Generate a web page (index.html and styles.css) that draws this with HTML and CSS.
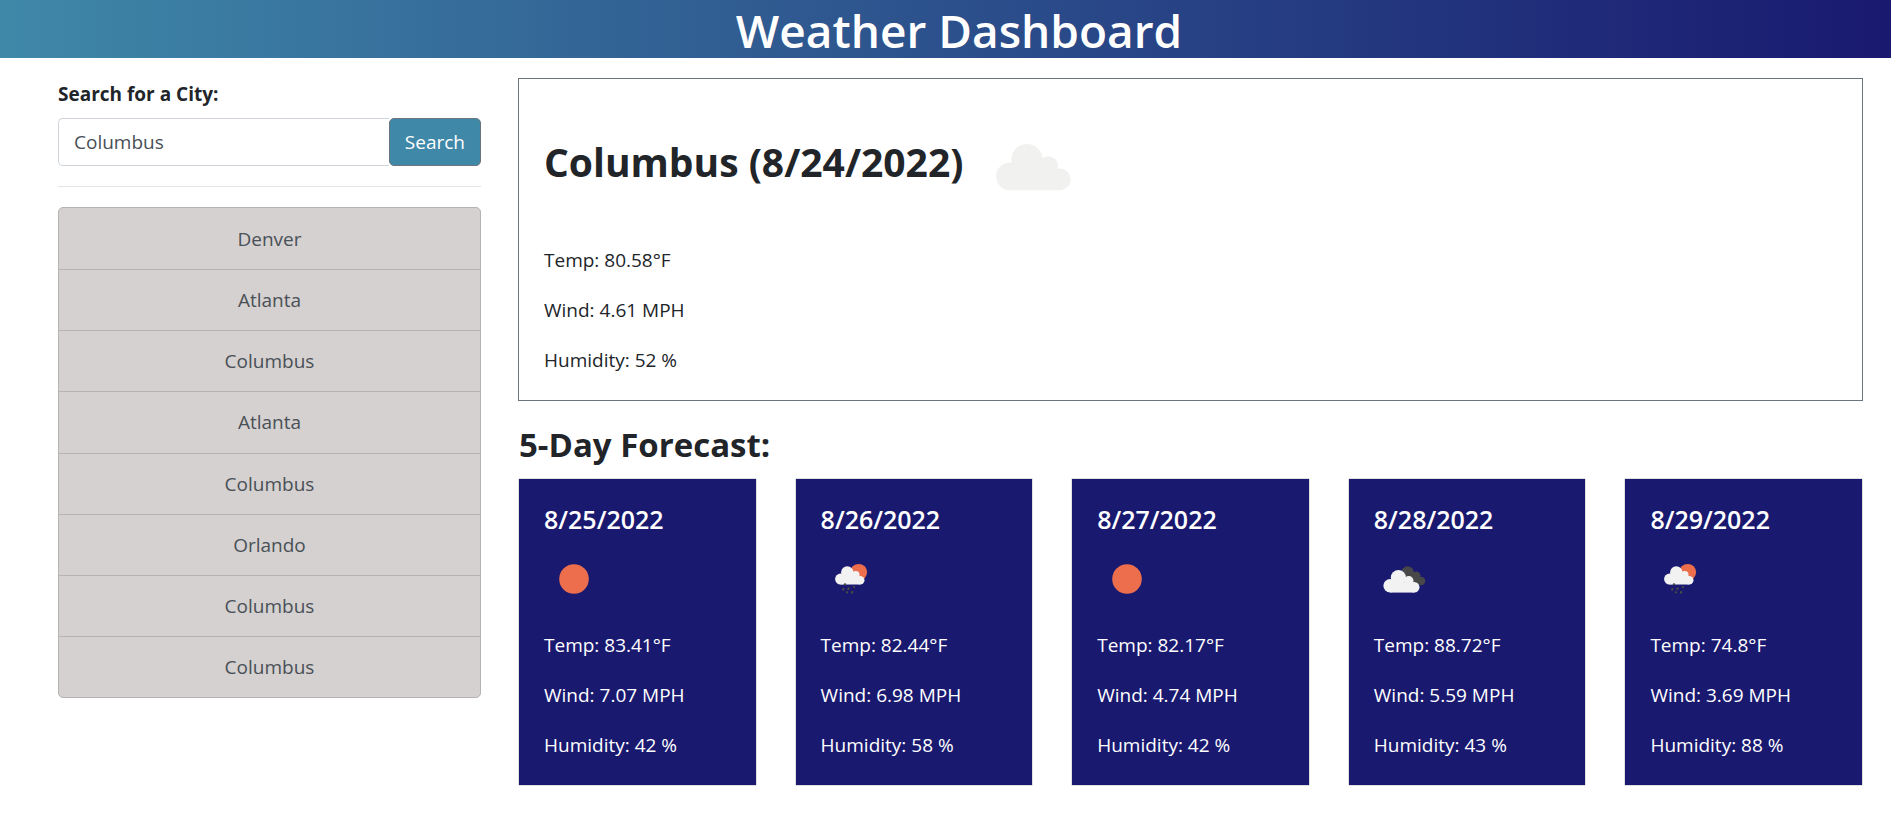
FILE: index.html
```html
<!DOCTYPE html>
<html lang="en">
<head>
<meta charset="utf-8">
<meta name="viewport" content="width=device-width, initial-scale=1">
<title>Weather Dashboard</title>
<link rel="stylesheet" href="styles.css">
</head>
<body>
<svg class="sprite" aria-hidden="true">
  <symbol id="cloud" viewBox="0 0 100 100">
    <circle cx="27" cy="59.3" r="13.9"/>
    <circle cx="44" cy="42.6" r="15.6"/>
    <circle cx="65.3" cy="49" r="9.8"/>
    <circle cx="76.7" cy="62.4" r="10.8"/>
    <rect x="27" y="52" width="49.7" height="21.2"/>
  </symbol>
  <symbol id="sun" viewBox="0 0 60 60">
    <circle cx="30" cy="30" r="14.8" fill="#ec6e4c"/>
  </symbol>
  <symbol id="rain" viewBox="0 0 60 60">
    <circle cx="37.7" cy="23.3" r="8.4" fill="#ec6e4c"/>
    <use href="#cloud" x="8.9" y="6.6" width="39.5" height="39.5" fill="#f2f2f2"/>
    <path d="M24.4 34.4l-.6 1.8M22.8 39.1l-.9 2.4M27.9 38.5l-.9 2.4M33.4 37.1l-.7 1.8M26.4 42.4l-.6 1.8M31.5 42.1l-.9 2.4" stroke="#4b4b46" stroke-width="2" fill="none"/>
  </symbol>
  <symbol id="clouds" viewBox="0 0 60 60">
    <g fill="#484848">
      <circle cx="33.6" cy="23.6" r="6.3"/>
      <circle cx="42.3" cy="26.6" r="4.2"/>
      <circle cx="47.1" cy="32" r="4.2"/>
      <path d="M34 24l8 1 5 4v7h-9z"/>
    </g>
    <use href="#cloud" x="3" y="8" width="48.6" height="48.6" fill="#f2f2f2"/>
  </symbol>
</svg>

<header class="banner"><h1 class="banner-title">Weather Dashboard</h1></header>

<div class="layout">
  <aside class="sidebar">
    <form class="search">
      <label class="search-label" for="city">Search for a City:</label>
      <div class="search-row">
        <input class="search-input" id="city" type="text" value="Columbus">
        <button class="search-button" type="button">Search</button>
      </div>
    </form>
    <hr class="divider">
    <div class="history">
      <button class="history-item" type="button">Denver</button>
      <button class="history-item" type="button">Atlanta</button>
      <button class="history-item" type="button">Columbus</button>
      <button class="history-item" type="button">Atlanta</button>
      <button class="history-item" type="button">Columbus</button>
      <button class="history-item" type="button">Orlando</button>
      <button class="history-item" type="button">Columbus</button>
      <button class="history-item" type="button">Columbus</button>
    </div>
  </aside>

  <main class="content">
    <section class="current">
      <div class="current-head">
        <h2 class="current-title">Columbus (8/24/2022)</h2>
        <svg class="current-icon" role="img" aria-label="Cloudy"><use href="#cloud"/></svg>
      </div>
      <p class="reading">Temp: 80.58°F</p>
      <p class="reading">Wind: 4.61 MPH</p>
      <p class="reading">Humidity: 52 %</p>
    </section>

    <h2 class="forecast-title">5-Day Forecast:</h2>
    <section class="forecast">
      <article class="card">
        <h3 class="card-date">8/25/2022</h3>
        <svg class="card-icon" role="img" aria-label="Clear"><use href="#sun"/></svg>
        <p class="reading">Temp: 83.41°F</p>
        <p class="reading">Wind: 7.07 MPH</p>
        <p class="reading">Humidity: 42 %</p>
      </article>
      <article class="card">
        <h3 class="card-date">8/26/2022</h3>
        <svg class="card-icon" role="img" aria-label="Rain"><use href="#rain"/></svg>
        <p class="reading">Temp: 82.44°F</p>
        <p class="reading">Wind: 6.98 MPH</p>
        <p class="reading">Humidity: 58 %</p>
      </article>
      <article class="card">
        <h3 class="card-date">8/27/2022</h3>
        <svg class="card-icon" role="img" aria-label="Clear"><use href="#sun"/></svg>
        <p class="reading">Temp: 82.17°F</p>
        <p class="reading">Wind: 4.74 MPH</p>
        <p class="reading">Humidity: 42 %</p>
      </article>
      <article class="card">
        <h3 class="card-date">8/28/2022</h3>
        <svg class="card-icon" role="img" aria-label="Broken clouds"><use href="#clouds"/></svg>
        <p class="reading">Temp: 88.72°F</p>
        <p class="reading">Wind: 5.59 MPH</p>
        <p class="reading">Humidity: 43 %</p>
      </article>
      <article class="card">
        <h3 class="card-date">8/29/2022</h3>
        <svg class="card-icon" role="img" aria-label="Rain"><use href="#rain"/></svg>
        <p class="reading">Temp: 74.8°F</p>
        <p class="reading">Wind: 3.69 MPH</p>
        <p class="reading">Humidity: 88 %</p>
      </article>
    </section>
  </main>
</div>
</body>
</html>
```
FILE: styles.css
```css
* { box-sizing: border-box; }

body {
  margin: 0;
  background: #fff;
  color: #212529;
  font: 400 19px/30px "Open Sans", "Noto Sans", sans-serif;
}

h1, h2, h3, p { margin: 0; }

.sprite { position: absolute; width: 0; height: 0; }

.banner {
  padding-left: 27px;
  background: linear-gradient(to right, #3f88a8, #191970);
  color: #fff;
  text-align: center;
}

.banner-title { padding-top: 2px; font-size: 46px; line-height: 56px; font-weight: 600; }

.layout {
  display: grid;
  grid-template-columns: 423fr 1345fr;
  gap: 37px;
  align-items: start;
  padding: 20px 28px 30px 58px;
}

.search-label { display: block; line-height: 32px; font-weight: 700; margin-bottom: 8px; }

.search-row { display: flex; }

.search-input {
  flex: 1;
  min-width: 0;
  height: 48px;
  padding: 0 15px;
  border: 1px solid #ced4da;
  border-right: 0;
  border-radius: 5px 0 0 5px;
  background: #fff;
  color: #495057;
  font: inherit;
}

.search-button {
  height: 48px;
  padding: 0 15px;
  border: 1px solid #6c757d;
  border-radius: 5px;
  background: #3f88a8;
  color: #fff;
  font: inherit;
}

.divider { margin: 20px 0; border: 0; border-top: 1px solid #e5e5e5; }

.history {
  display: grid;
  grid-auto-rows: 1fr;
  min-height: 491px;
  overflow: hidden;
  border: 1px solid #b7b3b3;
  border-radius: 5px;
  background: #d5d1d0;
}

.history-item {
  padding: 15px 25px;
  border: 0;
  border-top: 1px solid #b7b3b3;
  background: transparent;
  color: #495057;
  font: inherit;
}

.history-item:first-child { border-top: 0; }

.current {
  padding: 24px 25px 25px;
  border: 1px solid #6c757d;
}

.current-head { display: flex; align-items: center; gap: 20px; padding: 14px 0 28px; }

.current-title { padding-bottom: 10px; font-size: 39px; line-height: 48px; font-weight: 700; }

.current-icon { width: 100px; height: 100px; fill: #f1f1f0; }

.reading + .reading { margin-top: 20px; }

.forecast-title { margin: 20px 0 10px; padding-left: 1px; font-size: 33px; line-height: 47px; font-weight: 700; }

.forecast { display: grid; grid-template-columns: repeat(5, 1fr); gap: 38px; }

.card {
  padding: 25px;
  border: 1px solid #dfdfdf;
  border-radius: 1px;
  background: #191970;
  background-clip: padding-box;
  color: #fff;
}

.card-date { font-size: 25px; line-height: 30px; font-weight: 600; }

.card-icon { display: block; width: 60px; height: 60px; margin: 15px 0 21px; }
```
